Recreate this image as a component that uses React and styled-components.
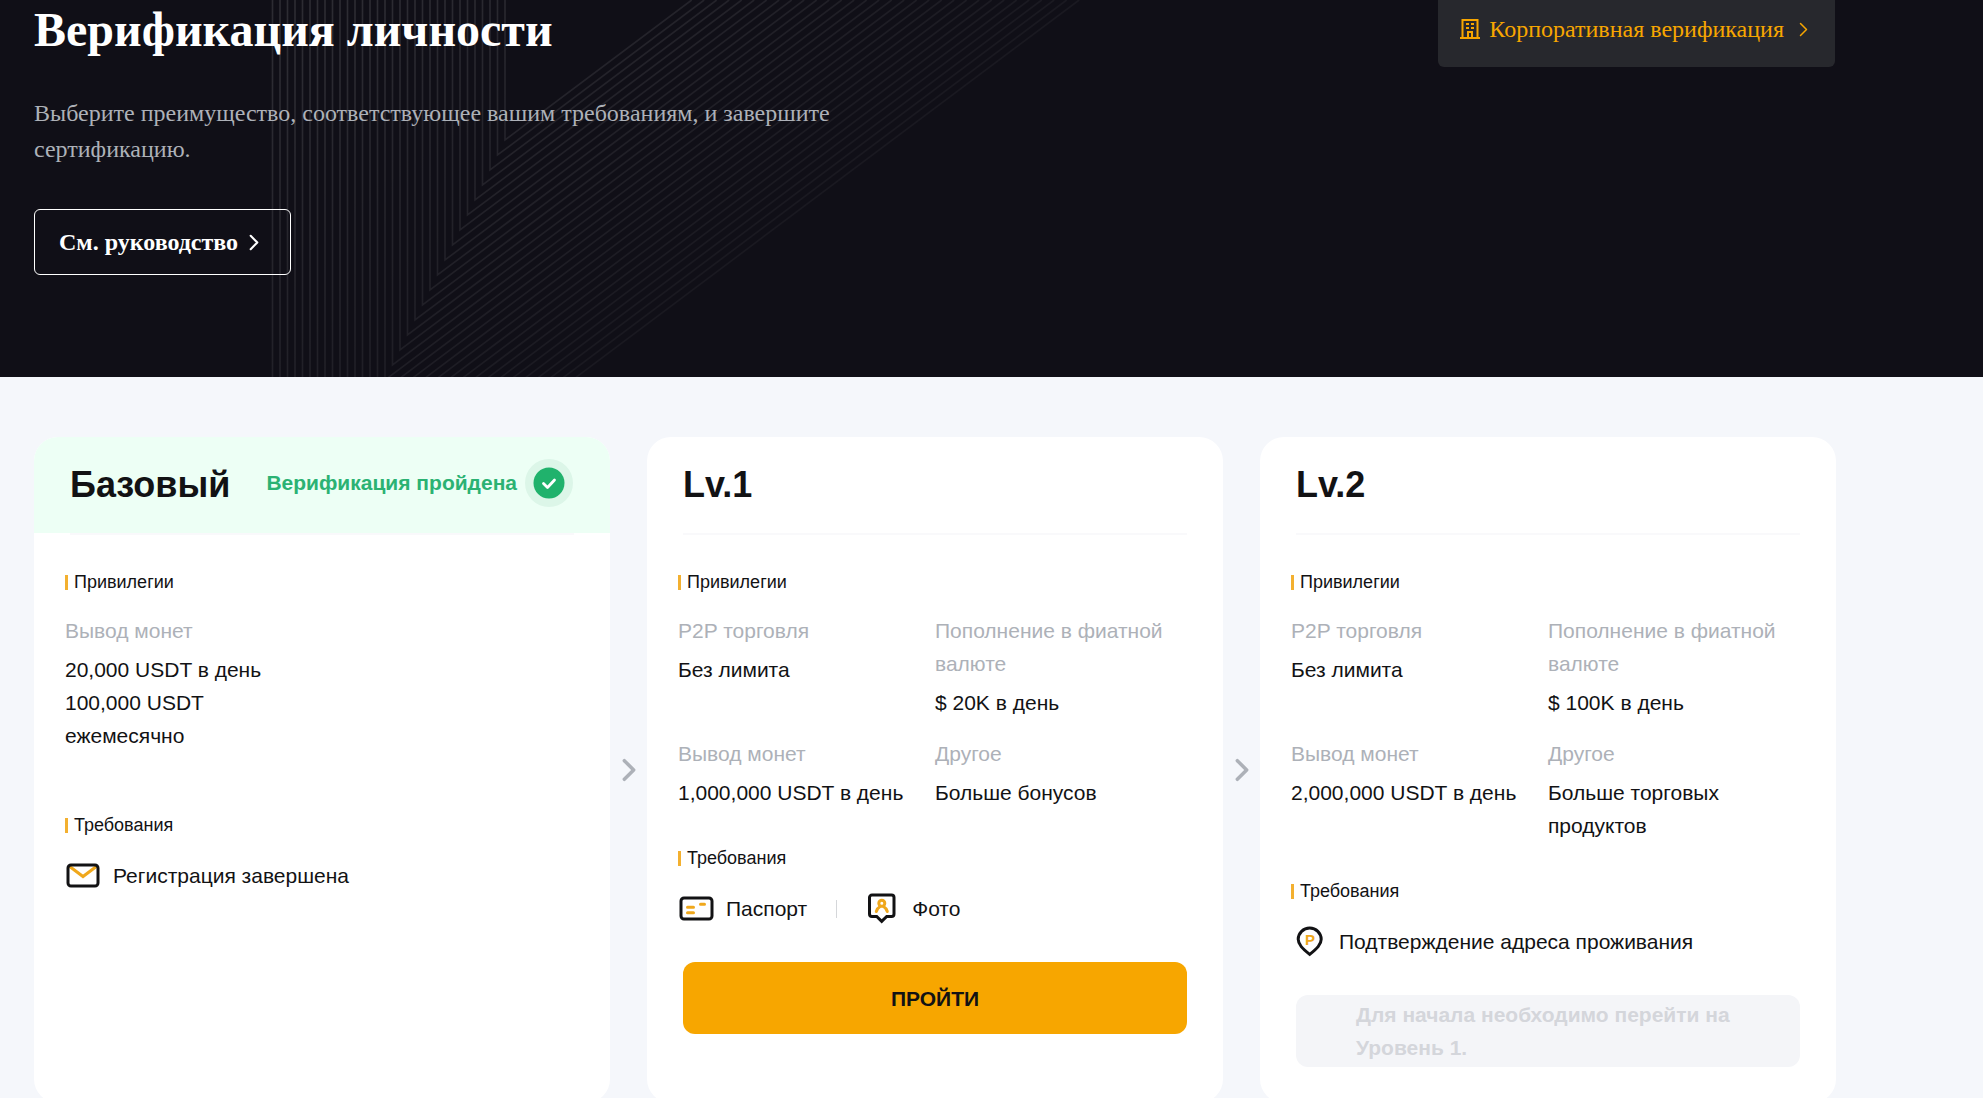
import React from "react";
import styled, { createGlobalStyle } from "styled-components";

const GlobalStyle = createGlobalStyle`
  * {
    box-sizing: border-box;
  }
  body {
    margin: 0;
    background: #f5f7fb;
    color: #121214;
    font-family: "Liberation Sans", Arial, sans-serif;
    font-size: 21px;
    line-height: 33px;
  }
  h1, h2, h3, p, dl, dd, ul {
    margin: 0;
    padding: 0;
  }
`;

const levels = [
  {
    title: "Базовый",
    passed: "Верификация пройдена",
    privileges: [
      {
        label: "Вывод монет",
        values: ["20,000 USDT в день", "100,000 USDT ежемесячно"],
      },
    ],
    requirements: [{ icon: "mail", text: "Регистрация завершена" }],
  },
  {
    title: "Lv.1",
    privileges: [
      { label: "P2P торговля", values: ["Без лимита"] },
      { label: "Пополнение в фиатной валюте", values: ["$ 20K в день"] },
      { label: "Вывод монет", values: ["1,000,000 USDT в день"] },
      { label: "Другое", values: ["Больше бонусов"] },
    ],
    requirements: [
      { icon: "passport", text: "Паспорт" },
      { icon: "photo", text: "Фото" },
    ],
    action: "ПРОЙТИ",
  },
  {
    title: "Lv.2",
    privileges: [
      { label: "P2P торговля", values: ["Без лимита"] },
      { label: "Пополнение в фиатной валюте", values: ["$ 100K в день"] },
      { label: "Вывод монет", values: ["2,000,000 USDT в день"] },
      { label: "Другое", values: ["Больше торговых продуктов"] },
    ],
    requirements: [{ icon: "pin", text: "Подтверждение адреса проживания" }],
    action: "Для начала необходимо перейти на Уровень 1.",
    locked: true,
  },
];

const icons = {
  mail: (
    <>
      <path d="M4 8l14 10.500L32 8" stroke="#f0a81c" />
      <rect x="3" y="7" width="30" height="21" rx="3" stroke="#121214" />
    </>
  ),
  passport: (
    <>
      <rect x="3" y="7" width="31" height="21" rx="3" stroke="#121214" />
      <path
        d="M9.500 16.200h6M9.500 21.800h6M22.500 13.200h4"
        stroke="#f0a81c"
        strokeLinecap="round"
      />
    </>
  ),
  photo: (
    <>
      <path
        d="M8 4h19.500a2.500 2.500 0 0 1 2.500 2.500V23a2.500 2.500 0 0 1-2.500 2.500h-4.800l-5 4.800-5-4.800H8A2.500 2.500 0 0 1 5.500 23V6.500A2.500 2.500 0 0 1 8 4z"
        stroke="#121214"
      />
      <circle cx="17.800" cy="12.300" r="3" stroke="#f0a81c" />
      <path
        d="M12.300 20.500c.8-2.600 2-4 3.800-5M23.300 20.500c-.8-2.600-2-4-3.800-5"
        stroke="#f0a81c"
        strokeLinecap="round"
      />
    </>
  ),
  pin: (
    <>
      <path
        d="M18.700 30.400C11.500 24.500 7.200 20.500 7.200 15.300a11.500 11.300 0 0 1 23 0c0 5.200-4.300 9.200-11.500 15.100z"
        stroke="#121214"
      />
      <text x="19" y="21" textAnchor="middle" fontSize="15" fontWeight="700" fill="#f0a81c">
        P
      </text>
    </>
  ),
};

function Chevron({ width, height, stroke }) {
  return (
    <svg width={width} height={height} viewBox="0 0 12 20" fill="none" aria-hidden="true">
      <path
        d="M2 2l8 8-8 8"
        stroke="currentColor"
        strokeWidth={stroke}
        strokeLinecap="round"
        strokeLinejoin="round"
      />
    </svg>
  );
}

// 32 nested strokes, each one 7.5 further left and 15 further down
function HeroLines() {
  const lines = Array.from({ length: 32 }, (_, i) => {
    const x = 505 - i * 7.5;
    const y = 140 + i * 15;
    return `M${x} 0V${y}L${x + y / 0.75} 0`;
  });
  return (
    <Lines width="1100" height="377" aria-hidden="true">
      <defs>
        <linearGradient id="fade" gradientUnits="userSpaceOnUse" x1="380" y1="0" x2="700" y2="427">
          <stop offset="0" stopColor="#fff" stopOpacity="0.12" />
          <stop offset="1" stopColor="#fff" stopOpacity="0.02" />
        </linearGradient>
      </defs>
      <path d={lines.join("")} fill="none" stroke="url(#fade)" strokeWidth="1.600" />
    </Lines>
  );
}

function LevelCard({ level }) {
  return (
    <Card>
      <CardHead $passed={level.passed}>
        <h2>{level.title}</h2>
        {level.passed && (
          <Status>
            {level.passed}
            <svg width="48" height="48" viewBox="0 0 48 48" fill="none" aria-hidden="true">
              <circle cx="24" cy="24" r="24" fill="#dcf6e8" />
              <circle cx="24" cy="24" r="15.500" fill="#20b26c" />
              <path
                d="M18.500 24.500l4 4 7-7.500"
                stroke="#fff"
                strokeWidth="2.800"
                strokeLinecap="round"
                strokeLinejoin="round"
              />
            </svg>
          </Status>
        )}
      </CardHead>
      <Divider />
      <CardBody>
        <SectionTitle>Привилегии</SectionTitle>
        <Privileges>
          {level.privileges.map((item) => (
            <div key={item.label}>
              <dt>{item.label}</dt>
              {item.values.map((value) => (
                <dd key={value}>{value}</dd>
              ))}
            </div>
          ))}
        </Privileges>
        <SectionTitle>Требования</SectionTitle>
        <Requirements>
          {level.requirements.map((item) => (
            <li key={item.text}>
              <svg width="36" height="36" viewBox="0 0 36 36" fill="none" strokeWidth="3" aria-hidden="true">
                {icons[item.icon]}
              </svg>
              {item.text}
            </li>
          ))}
        </Requirements>
      </CardBody>
      {level.action && (
        <Action type="button" disabled={level.locked}>
          {level.action}
        </Action>
      )}
    </Card>
  );
}

function App() {
  return (
    <>
      <GlobalStyle />
      <Hero>
        <HeroLines />
        <Intro>
          <h1>Верификация личности</h1>
          <p>
            Выберите преимущество, соответствующее вашим требованиям, и
            завершите сертификацию.
          </p>
          <GuideButton type="button">
            См. руководство
            <IconBox>
              <Chevron width={10} height={17} stroke={2.5} />
            </IconBox>
          </GuideButton>
        </Intro>
        <CorporateLink href="#corporate">
          <svg width="24" height="24" viewBox="0 0 24 24" fill="none" aria-hidden="true">
            <path
              d="M2 21h20M4.500 21V3h15v18M10 21v-6h4v6"
              stroke="currentColor"
              strokeWidth="2"
            />
            <path d="M8 6h3v2H8zM13 6h3v2h-3zM8 10h3v2H8zM13 10h3v2h-3z" fill="currentColor" />
          </svg>
          <span>Корпоративная верификация</span>
          <IconBox>
            <Chevron width={9} height={15} stroke={2} />
          </IconBox>
        </CorporateLink>
      </Hero>
      <Levels>
        {levels.map((level, index) => (
          <React.Fragment key={level.title}>
            {index > 0 && (
              <Step>
                <Chevron width={14} height={24} stroke={3} />
              </Step>
            )}
            <LevelCard level={level} />
          </React.Fragment>
        ))}
      </Levels>
    </>
  );
}

const Hero = styled.header`
  position: relative;
  display: flex;
  justify-content: space-between;
  align-items: flex-start;
  padding: 0 148px 102px 34px;
  background: #100f17;
  font-family: "Liberation Serif", "Times New Roman", serif;
  font-size: 24px;
  line-height: 36px;
`;

const Lines = styled.svg`
  position: absolute;
  top: 0;
  left: 0;
  height: 100%;
`;

const Intro = styled.div`
  position: relative;
  max-width: 840px;
  h1 {
    color: #ffffff;
    font-size: 48px;
    line-height: 60px;
  }
  p {
    margin: 35px 0 42px;
    color: #adb1b8;
  }
`;

const IconBox = styled.span`
  display: flex;
  align-items: center;
  justify-content: center;
  width: 24px;
  height: 24px;
`;

const GuideButton = styled.button`
  display: flex;
  align-items: center;
  gap: 4px;
  height: 66px;
  padding: 0 24px;
  border: 1px solid #ffffff;
  border-radius: 6px;
  background: transparent;
  color: #ffffff;
  font: inherit;
  font-weight: 700;
`;

const CorporateLink = styled.a`
  position: relative;
  display: flex;
  align-items: center;
  gap: 7px;
  padding: 11px 20px 20px;
  border-radius: 0 0 6px 6px;
  background: #27282d;
  color: #f7a600;
  text-decoration: none;
`;

const Levels = styled.main`
  display: flex;
  padding: 60px 147px 0 34px;
`;

const Step = styled.div`
  display: flex;
  align-items: center;
  justify-content: center;
  width: 37px;
  color: #adb1b8;
`;

const Card = styled.section`
  flex: 1 1 0;
  min-width: 0;
  overflow: hidden;
  padding-bottom: 36px;
  border-radius: 24px;
  background: #ffffff;
`;

const CardHead = styled.div`
  display: flex;
  align-items: center;
  justify-content: space-between;
  height: 96px;
  padding: 0 36px;
  background: ${(props) => (props.$passed ? "#edfff5" : "transparent")};
  h2 {
    font-size: 36px;
    line-height: 48px;
  }
`;

const Status = styled.div`
  display: flex;
  align-items: center;
  gap: 8px;
  padding: 0 1px 5px 0;
  color: #2bb273;
  font-weight: 700;
`;

const Divider = styled.div`
  height: 2px;
  margin: 0 36px;
  background: #f9f9fb;
`;

const CardBody = styled.div`
  padding: 34px 31px 0;
`;

const SectionTitle = styled.h3`
  display: flex;
  align-items: center;
  gap: 6px;
  font-size: 18px;
  font-weight: 400;
  line-height: 27px;
  &::before {
    content: "";
    width: 3px;
    height: 15px;
    background: #f3b030;
  }
`;

const Privileges = styled.dl`
  display: grid;
  grid-template-columns: 1fr 1fr;
  align-content: start;
  gap: 18px 0;
  min-height: 162px;
  margin: 18px 0 36px;
  dt {
    margin-bottom: 6px;
    color: #adb1b8;
  }
`;

const Requirements = styled.ul`
  display: flex;
  margin-top: 20px;
  list-style: none;
  li {
    display: flex;
    align-items: center;
    gap: 12px;
    height: 33px;
  }
  li + li::before {
    content: "";
    width: 1px;
    height: 18px;
    margin: 0 15px 0 29px;
    background: #d5d7da;
  }
`;

const Action = styled.button`
  display: block;
  width: calc(100% - 72px);
  height: 72px;
  margin: 37px 36px 0;
  padding: 0 60px;
  border: 0;
  border-radius: 12px;
  background: #f7a600;
  color: #121214;
  font: inherit;
  font-weight: 700;
  &:disabled {
    background: #f4f5f8;
    color: #d4d6db;
    text-align: left;
  }
`;

export default App;
